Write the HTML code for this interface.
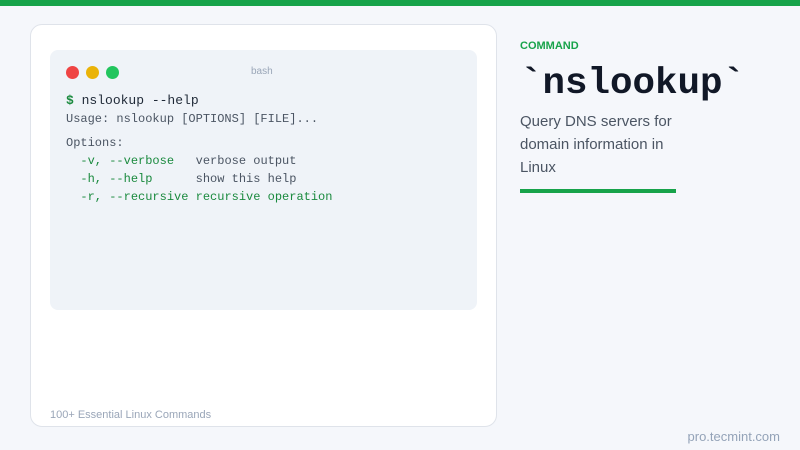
<!DOCTYPE html>
<html><head><meta charset="utf-8"><style>
*{margin:0;padding:0;box-sizing:border-box}
body{width:800px;height:450px;background:#f5f7fb;position:relative;overflow:hidden;font-family:"Liberation Sans",sans-serif}
.top{position:absolute;left:0;top:0;width:800px;height:6px;background:#17a34a}
.card{position:absolute;left:30px;top:24px;width:467px;height:403px;background:#fff;border:1px solid #dfe3ea;border-radius:12px}
.term{position:absolute;left:50px;top:50px;width:427px;height:260px;background:#eff3f8;border-radius:8px;font-family:"Liberation Mono",monospace}
.dot{position:absolute;top:16px;width:13px;height:13px;border-radius:50%}
.bash{position:absolute;left:201px;top:16px;font-size:10px;color:#9aa6b8;font-family:"Liberation Sans",sans-serif}
.l{position:absolute;left:16px;white-space:pre;font-size:12px;color:#4b5563}
.g{color:#1a8a3e}
.foot{position:absolute;left:50px;top:409px;font-size:11px;color:#9aa6b8}
.lab{position:absolute;left:520px;top:40px;font-size:11px;font-weight:bold;color:#17a34a}
.title{position:absolute;left:520px;top:63px;font-family:"Liberation Mono",monospace;font-weight:bold;font-size:37.5px;color:#111827}
.desc{position:absolute;left:520px;top:110px;width:170px;font-size:15px;line-height:23px;color:#4b5563}
.bar{position:absolute;left:520px;top:189px;width:156px;height:4px;background:#17a34a}
.url{position:absolute;right:20px;top:429px;font-size:13px;color:#94a3b8}
</style></head><body>
<div class="top"></div>
<div class="card"></div>
<div class="term">
<div class="dot" style="left:16px;background:#ef4444"></div>
<div class="dot" style="left:36px;background:#eab308"></div>
<div class="dot" style="left:56px;background:#22c55e"></div>
<div class="bash">bash</div>
<div class="l" style="top:43px;font-size:13px;color:#1f2937"><b class="g">$</b> nslookup --help</div>
<div class="l" style="top:62px">Usage: nslookup [OPTIONS] [FILE]...</div>
<div class="l" style="top:86px">Options:</div>
<div class="l" style="top:104px">  <span class="g">-v, --verbose</span>   verbose output</div>
<div class="l" style="top:122px">  <span class="g">-h, --help</span>      show this help</div>
<div class="l" style="top:140px">  <span class="g">-r, --recursive</span> <span class="g">recursive operation</span></div>
</div>
<div class="foot">100+ Essential Linux Commands</div>
<div class="lab">COMMAND</div>
<div class="title">`nslookup`</div>
<div class="desc">Query DNS servers for domain information in Linux</div>
<div class="bar"></div>
<div class="url">pro.tecmint.com</div>
</body></html>
